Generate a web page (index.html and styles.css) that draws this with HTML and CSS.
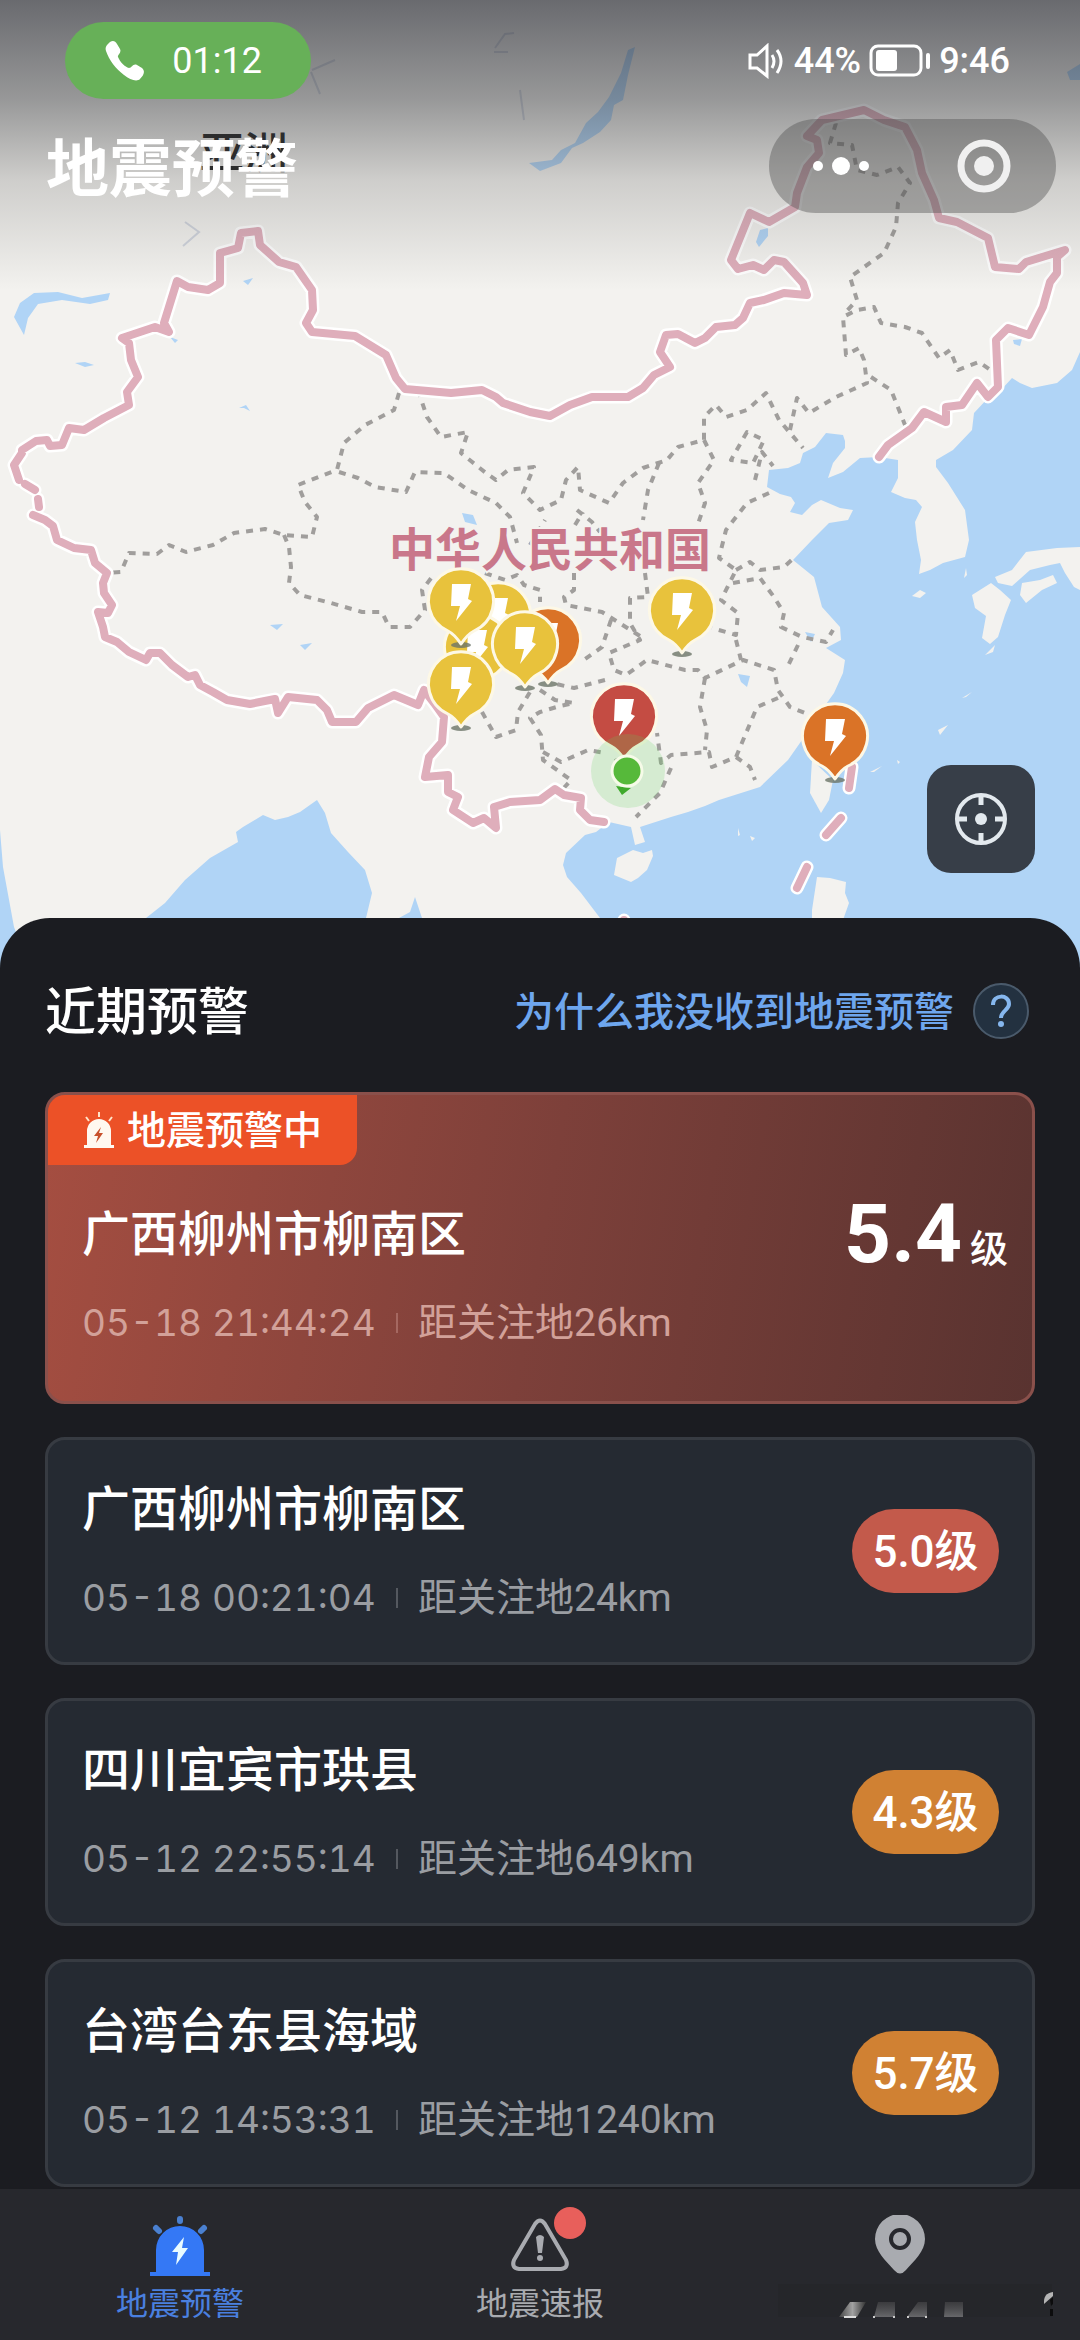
FILE: index.html
```html
<!DOCTYPE html>
<html lang="zh-CN">
<head>
    <meta charset="UTF-8">
    <meta name="viewport" content="width=device-width, initial-scale=1.0">
    <title>地震预警</title>
    <link rel="stylesheet" href="styles.css">
</head>
<body>
    <!-- shared icons -->
    <svg class="sprite" aria-hidden="true">
        <symbol id="pin" viewBox="-40 -40 80 96" overflow="visible">
            <ellipse cx="0" cy="44" rx="10" ry="3" fill="#6b7468" fill-opacity="0.8"/>
            <path class="pin-body" d="M-13 30 A32.500 32.500 0 1 1 13 30 C7 33 4 37 0 43 C-4 37 -7 33 -13 30 Z"/>
            <path d="M-9 -17 H10 L7 -2 L11 0 L-5 20 L-1 5 H-10 Z" fill="#fff"/>
        </symbol>
        <path id="border" d="M19 480 L14 465 L22 453 L22 450 L36 441 L47 440 L50 446 L62 445 L69 428 L84 430 L104 418 L129 405 L127 392 L138 377 L131 360 L129 343 L122 338 L155 327 L169 332 L164 323 L177 281 L188 287 L208 290 L220 283 L220 253 L238 248 L241 233 L258 231 L260 245 L279 262 L296 267 L312 290 L313 310 L306 323 L312 332 L355 336 L386 355 L396 378 L405 389 L451 393 L482 390 L496 397 L503 403 L530 412 L550 416 L570 405 L592 397 L628 397 L643 388 L654 375 L670 367 L660 352 L666 335 L678 334 L695 343 L705 338 L716 327 L735 325 L743 318 L750 303 L764 300 L784 293 L807 295 L803 283 L784 262 L774 260 L764 270 L753 265 L738 269 L731 260 L750 213 L769 222 L795 207 L797 193 L807 167 L819 153 L817 140 L807 136 L822 120 L864 110 L884 120 L905 127 L917 150 L922 173 L934 200 L939 218 L957 222 L988 238 L995 267 L1019 269 L1026 262 L1065 250 L1057 257 L1057 273 L1050 282 L1043 307 L1029 335 L1008 328 L996 340 L998 387 L988 397 L977 383 L962 405 L946 407 L946 422 L924 412 L912 428 L888 445 L879 457 M25 484 L35 490 M38 499 L39 507 M33 515 L45 520 L53 526 L57 540 L74 548 L91 550 L95 563 L107 573 L103 583 L104 593 L112 605 L108 613 L98 612 L103 627 L105 637 L117 642 L129 652 L146 660 L150 653 L160 653 L172 665 L188 677 L195 675 L200 685 L213 692 L227 700 L250 704 L275 699 L278 713 L288 697 L317 700 L327 710 L332 722 L356 722 L368 708 L394 695 L418 705 L424 690 L434 703 L444 717 L442 742 L429 757 L425 777 L448 775 L448 792 L458 797 L453 810 L473 823 L484 818 L496 828 L494 807 L510 802 L540 800 L555 789 L564 795 L581 798 L580 810 L590 820 L604 822 M852 767 L849 788 M841 818 L826 835 M807 867 L797 888 M624 920 V930"/>
    </svg>

    <section class="map">
        <svg class="map-canvas" viewBox="0 0 1080 968" preserveAspectRatio="xMidYMin slice" role="img" aria-label="地图">
            <rect width="1080" height="968" fill="#f3f2ef"/>

            <!-- sea -->
            <g class="sea">
                <path d="M1080 352 L1072 370 L1057 383 L1032 388 L1020 383 L1012 378 L1001 390 L988 398 L974 413 L972 430 L953 450 L936 460 L936 467 L948 483 L965 510 L969 540 L965 557 L943 563 L930 570 L919 574 L921 560 L917 540 L915 522 L922 507 L916 500 L905 498 L891 492 L898 478 L898 460 L879 457 L860 458 L843 472 L828 478 L833 463 L845 448 L845 441 L843 435 L826 433 L815 447 L803 453 L800 463 L788 468 L769 470 L767 487 L780 494 L791 497 L795 503 L790 512 L802 515 L812 505 L821 500 L840 508 L853 510 L848 520 L829 523 L812 540 L793 560 L814 577 L822 607 L840 627 L841 640 L826 648 L845 660 L843 673 L834 693 L824 707 L802 740 L788 760 L760 787 L719 800 L705 806 L688 812 L671 817 L640 827 L645 842 L635 845 L631 827 L609 822 L596 832 L585 835 L566 853 L563 865 L567 877 L581 893 L600 918 L625 968 H1080 Z"/>
                <path d="M100 968 L146 918 L165 903 L185 880 L210 858 L238 842 L236 832 L243 827 L263 815 L275 820 L288 817 L300 812 L317 800 L325 813 L331 833 L348 852 L365 870 L372 893 L366 918 L360 968 Z"/>
                <path d="M395 968 L399 918 L410 912 L415 897 L422 918 L430 968 Z"/>
                <path d="M0 830 L3 867 L14 927 L30 968 H0 Z"/>
            </g>

            <!-- lakes -->
            <g class="lake">
                <path d="M635 47 L628 50 L621 73 L609 97 L598 112 L586 123 L575 143 L561 150 L552 160 L529 163 L540 171 L561 163 L572 148 L583 143 L600 132 L611 120 L614 105 L623 100 L628 75 Z"/>
                <path d="M14 317 L20 303 L34 293 L58 292 L82 298 L110 293 L108 300 L90 304 L62 300 L38 304 L28 318 L24 335 Z"/>
                <path d="M75 363 L85 362 L94 365 L85 367 Z"/>
                <path d="M170 337 L178 340 L175 343 Z"/>
                <path d="M243 281 L253 278 L248 285 Z"/>
                <path d="M239 408 L246 405 L250 411 L244 408 Z"/>
                <path d="M760 230 L768 228 L768 236 L759 247 L756 242 Z"/>
                <path d="M1013 340 L1022 339 L1020 346 L1014 344 Z"/>
                <path d="M462 513 L473 515 L477 525 L465 522 Z"/>
                <path d="M300 645 L312 643 L305 650 Z"/>
                <path d="M270 625 L283 624 L277 630 Z"/>
                <path d="M1067 72 L1080 64 V80 L1070 80 Z"/>
                <path d="M738 674 L750 676 L747 687 L741 682 Z"/>
                <path d="M805 632 L815 634 L811 642 Z"/>
            </g>
            <path d="M495 48 L505 34 L514 33 M494 52 L508 52 M312 70 L335 60 M311 72 L320 94 M520 90 L524 120 M185 222 L199 232 L183 246" fill="none" stroke="#9aa7c4" stroke-width="2" stroke-opacity="0.4"/>

            <!-- islands -->
            <g class="land">
                <path d="M1080 547 L1057 548 L1026 552 L1012 570 L995 577 L998 583 L1012 586 L1030 570 L1050 565 L1060 563 L1065 573 L1074 587 L1080 590 Z"/>
                <path d="M1022 583 L1040 580 L1053 575 L1057 583 L1042 590 L1026 603 L1020 595 Z"/>
                <path d="M991 583 L1000 590 L1011 600 L1005 615 L998 637 L990 644 L982 638 L986 616 L975 608 L972 595 Z"/>
                <path d="M912 596 L920 590 L926 593 L920 598 Z"/>
                <path d="M812 760 L833 780 L829 800 L821 813 L810 793 Z"/>
                <path d="M633 850 L643 853 L652 850 L653 856 L647 870 L638 878 L631 882 L614 875 L617 858 Z"/>
                <path d="M817 877 L830 878 L846 882 L845 893 L849 903 L843 920 L850 968 H812 L812 910 Z"/>
                <path d="M966 568 L967 575 L964 578 Z M962 698 L972 692 L966 697 Z M938 730 L948 725 L940 735 Z M870 772 L882 766 L874 772 Z M897 760 L900 762 L898 764 Z M738 828 L740 835 L738 836 Z M750 836 L755 838 L752 841 Z M985 655 L993 652 L995 645 Z"/>
            </g>

            <!-- province lines -->
            <g class="province">
                <path d="M399 393 L394 410 L365 425 L344 443 L337 470 L298 485 L305 502 L317 517 L312 537 L284 535 L265 529 L234 533 L213 545 L186 552 L169 545 L157 554 L129 553 L121 572 L107 573"/>
                <path d="M284 535 L289 547 L291 567 L289 583 L300 595 L331 603 L362 612 L382 612 L389 627 L410 627 L425 610 L422 590 L432 577"/>
                <path d="M485 573 L505 580 L517 575 L524 585 L540 590 L540 602"/>
                <path d="M339 472 L358 478 L375 487 L406 492 L415 472 L444 473 L468 490 L496 503 L510 517 L517 543"/>
                <path d="M418 390 L427 417 L441 437 L468 432 L461 453 L486 473 L496 480 L508 470 L534 467 L523 493 L540 510 L561 500 L566 480 L578 467 L580 490 L609 503 L623 483 L643 468 L667 460 L678 447 L704 440 L704 417 L716 405 L726 417 L747 410 L766 393 L779 420 L803 448"/>
                <path d="M790 430 L797 398 L809 413 L836 397 L867 383 L864 360 L859 348 L846 355 L843 317 L857 310 L874 307 L881 323 L905 327 L922 333 L939 358 L950 350 L958 370 L979 362 L995 373"/>
                <path d="M836 123 L830 143 L852 145 L857 170 L877 175 L898 167 L910 183 L898 203 L896 227 L884 253 L850 277 L857 300 L843 315"/>
                <path d="M871 377 L891 390 L905 425"/>
                <path d="M747 432 L731 460 L753 463 L764 440 Z M755 480 L762 452 L773 466"/>
                <path d="M704 440 L714 460 L698 483 L705 503 L697 527"/>
                <path d="M659 463 L648 490 L643 520 M645 573 L648 597 L630 598 L630 623 L640 640 L609 653 L614 670 L626 675 L647 660 L685 670 L698 670 L705 678 L743 660 L774 670 L778 690 L790 707 L805 713"/>
                <path d="M769 493 L747 503 L726 530 L719 558 L736 570 L721 600 L738 613 L736 635 L712 628 M736 640 L741 660"/>
                <path d="M736 570 L750 562 L760 570 L784 567 L795 557"/>
                <path d="M733 583 L760 578 L774 597 L784 613 L781 627 L802 637 L826 642 L833 630 M798 645 L786 670"/>
                <path d="M778 698 L757 707 L736 757 L712 767 L709 752 L671 755 L661 763 L657 733"/>
                <path d="M705 678 L700 707 L707 730 L705 750 M736 757 L750 767 L755 780"/>
                <path d="M671 768 L660 793 L636 817"/>
                <path d="M605 680 L574 688 L556 684 M540 690 L555 700 L574 703 L560 706 L540 712 L530 718 L541 735 L543 760 L571 780 L562 790 M543 752 L561 762 L588 750 L605 753"/>
                <path d="M574 573 L574 590 L564 597 L566 605 L602 612 L640 636 M611 620 L602 647 L581 662"/>
                <path d="M482 712 L496 737 L516 730 L518 712 L530 692"/>
                <path d="M530 545 L545 520 M577 510 L592 522 L600 532 M575 525 L583 512"/>
            </g>

            <!-- national border, white casing below the pink line -->
            <use class="border-casing" href="#border"/>
            <use class="border" href="#border"/>

            <g class="map-text">
                <text class="continent" x="244" y="169">亚洲</text>
                <text class="country" x="550" y="566">中华人民共和国</text>
            </g>

            <!-- earthquake pins -->
            <g class="yellow">
                <use href="#pin" x="458" y="575" width="80" height="96"/>
                <use href="#pin" x="437" y="607" width="80" height="96"/>
            </g>
            <use class="orange" href="#pin" x="508" y="600" width="80" height="96"/>
            <g class="yellow">
                <use href="#pin" x="485" y="604" width="80" height="96"/>
                <use href="#pin" x="421" y="561" width="80" height="96"/>
                <use href="#pin" x="421" y="644" width="80" height="96"/>
                <use href="#pin" x="642" y="570" width="80" height="96"/>
            </g>
            <use class="orange" href="#pin" x="795" y="696" width="80" height="96"/>
            <use class="red" href="#pin" x="584" y="676" width="80" height="96"/>

            <!-- my place -->
            <circle cx="628" cy="771" r="37" fill="#5fd35a" fill-opacity="0.2"/>
            <path d="M616 786 L631 788 L622 795 Z" fill="#3fa92c"/>
            <circle cx="627" cy="771" r="15" fill="#56b93a" stroke="#f6fbe8" stroke-width="3"/>
        </svg>

        <header class="top">
            <div class="status-bar">
                <div class="call">
                    <svg width="40" height="42" viewBox="0 0 40 42" aria-hidden="true">
                        <path d="M3 4 C6 0 10 0 12 4 L15 9 C17 13 12 15 13 17 C15 22 20 27 24 28 C27 28 28 23 32 25 L37 28 C41 32 38 36 35 39 C32 42 25 40 19 35 C11 29 4 20 1 11 C0 8 1 6 3 4 Z" fill="#fff"/>
                    </svg>
                    <span>01:12</span>
                </div>
                <div class="status-icons">
                    <svg width="38" height="36" viewBox="0 0 38 36" fill="none" stroke="#fff" aria-hidden="true">
                        <path d="M2 12 V25 H9 L19 33 V3 L9 12 Z" stroke-width="3"/>
                        <path d="M24 12 Q28 18 24 25 M29 7 Q37 18 29 30" stroke-width="3"/>
                    </svg>
                    <span>44%</span>
                    <svg width="62" height="34" viewBox="0 0 62 34" aria-hidden="true">
                        <rect x="2" y="2" width="50" height="29" rx="7" fill="none" stroke="#fff" stroke-width="3"/>
                        <rect x="7" y="6" width="21" height="21" rx="3" fill="#fff"/>
                        <rect x="57" y="9" width="4" height="16" rx="2" fill="#fff"/>
                    </svg>
                    <span>9:46</span>
                </div>
            </div>
            <div class="title-bar">
                <h1>地震预警</h1>
                <div class="capsule">
                    <button type="button" aria-label="更多">
                        <svg width="56" height="20" viewBox="0 0 56 20" fill="#fff">
                            <circle cx="5" cy="10" r="5"/><circle cx="28" cy="10" r="9"/><circle cx="51" cy="10" r="5"/>
                        </svg>
                    </button>
                    <button type="button" aria-label="关闭">
                        <svg width="54" height="54" viewBox="0 0 54 54">
                            <circle cx="27" cy="27" r="23" fill="none" stroke="#f0f0f0" stroke-width="7"/>
                            <circle cx="27" cy="27" r="10" fill="#f0f0f0"/>
                        </svg>
                    </button>
                </div>
            </div>
        </header>

        <button type="button" class="locate" aria-label="定位">
            <svg width="54" height="54" viewBox="0 0 54 54" fill="none" stroke="#e3e9ee" stroke-width="4">
                <circle cx="27" cy="27" r="24"/>
                <path d="M27 3 V13 M27 41 V51 M3 27 H13 M41 27 H51" stroke-width="5"/>
                <circle cx="27" cy="27" r="6" fill="#e3e9ee" stroke="none"/>
            </svg>
        </button>
    </section>

    <main class="sheet">
        <div class="sheet-header">
            <h2>近期预警</h2>
            <a href="#help"><span>为什么我没收到地震预警</span>
                <svg width="58" height="58" viewBox="0 0 58 58" fill="none" aria-hidden="true">
                    <circle cx="29" cy="29" r="27" fill="#233140" stroke="#4a5a6b" stroke-width="2"/>
                    <path d="M21 23 C21 12 37 12 37 22 C37 28 29 29 29 36" stroke="#86b7ee" stroke-width="4"/>
                    <circle cx="29" cy="42" r="3" fill="#86b7ee"/>
                </svg>
            </a>
        </div>

        <article class="card card-active">
            <div class="tag">
                <svg width="30" height="37" viewBox="0 0 30 37" aria-hidden="true">
                    <path d="M0 33 H3 V19 A12 12 0 0 1 27 19 V33 H30 V36 H0 Z" fill="#fff8f0"/>
                    <path d="M15 0 V5 M2 5 L5 9 M28 5 L25 9" stroke="#ffe3c8" stroke-width="2"/>
                    <path d="M17 15 L10 24 H14 L12 31 L19 21 H15 Z" fill="#c8502c"/>
                </svg>
                <span>地震预警中</span>
            </div>
            <div class="card-body">
                <div>
                    <h3>广西柳州市柳南区</h3>
                    <p class="meta"><time>05-18 21:44:24</time><span>距关注地26km</span></p>
                </div>
                <p class="magnitude"><strong>5.4</strong>级</p>
            </div>
        </article>

        <article class="card">
            <div class="card-body">
                <div>
                    <h3>广西柳州市柳南区</h3>
                    <p class="meta"><time>05-18 00:21:04</time><span>距关注地24km</span></p>
                </div>
                <p class="level level-red">5.0级</p>
            </div>
        </article>

        <article class="card">
            <div class="card-body">
                <div>
                    <h3>四川宜宾市珙县</h3>
                    <p class="meta"><time>05-12 22:55:14</time><span>距关注地649km</span></p>
                </div>
                <p class="level">4.3级</p>
            </div>
        </article>

        <article class="card">
            <div class="card-body">
                <div>
                    <h3>台湾台东县海域</h3>
                    <p class="meta"><time>05-12 14:53:31</time><span>距关注地1240km</span></p>
                </div>
                <p class="level">5.7级</p>
            </div>
        </article>
    </main>

    <nav class="tab-bar">
        <a href="#warning" class="active">
            <svg width="60" height="62" viewBox="0 0 60 62" aria-hidden="true">
                <path d="M0 57 H6 V35 A24 24 0 0 1 54 35 V57 H60 V61 H0 Z" fill="#3478f5"/>
                <path d="M30 4 V6 M6 13 L9 16 M54 13 L51 16" stroke="#4a80d0" stroke-width="6" stroke-linecap="round"/>
                <path d="M34 22 L22 37 H28 L26 50 L38 33 H32 Z" fill="#e8fbff"/>
            </svg>
            <span>地震预警</span>
        </a>
        <a href="#report">
            <svg width="60" height="62" viewBox="0 0 60 62" fill="none" aria-hidden="true">
                <path d="M25 9 Q30 2 35 9 L56 45 Q59 53 51 54 H9 Q1 53 4 45 Z" stroke="#a9abb0" stroke-width="4"/>
                <path d="M26 22 Q30 18 34 22 L32 38 H28 Z" fill="#a9abb0"/>
                <circle cx="30" cy="43" r="3" fill="#a9abb0"/>
            </svg>
            <i class="dot"></i>
            <span>地震速报</span>
        </a>
        <a href="#place" aria-label="我的位置">
            <svg width="60" height="62" viewBox="0 0 60 62" aria-hidden="true">
                <path d="M30 -1 A25 25 0 0 1 55 24 C55 36 44 46 36 55 Q30 62 24 55 C16 46 5 36 5 24 A25 25 0 0 1 30 -1 Z" fill="#a9abb0"/>
                <circle cx="30" cy="24" r="9" fill="none" stroke="#27282d" stroke-width="4"/>
            </svg>
            <svg class="smear" viewBox="0 0 320 40" aria-hidden="true">
                <defs>
                    <linearGradient id="fade" x1="0" y1="0" x2="0" y2="1">
                        <stop offset="0" stop-color="#4a4a4c" stop-opacity="0.6"/>
                        <stop offset="1" stop-color="#68686b"/>
                    </linearGradient>
                    <linearGradient id="streak" x1="0" y1="0" x2="1" y2="0">
                        <stop offset="0" stop-color="#444"/>
                        <stop offset="0.5" stop-color="#a2a2a2"/>
                        <stop offset="1" stop-color="#333"/>
                    </linearGradient>
                </defs>
                <rect x="38" y="4" width="274" height="33" fill="#222326" fill-opacity="0.3"/>
                <path d="M110 22 H126 L117 37 H99 Z" fill="url(#streak)"/>
                <path d="M138 22 H155 V37 H134 Z M178 22 H187 V37 H167 Z M205 22 H223 V37 H204 Z" fill="url(#fade)"/>
                <path d="M104 36 H116 V38 H104 Z" fill="#ddd"/>
                <path d="M133 36 H135 V38 H133 Z M153 36 H155 V38 H153 Z M167 36 H169 V38 H167 Z M185 36 H187 V38 H185 Z" fill="#ccc"/>
                <path d="M304 24 Q303 13 313 12 V16 Z" fill="#b5b5b5"/>
                <path d="M310 20 L313 17 V24 L311 26 Z M310 29 H313 V36 H310 Z" fill="#0c0c0d"/>
            </svg>
        </a>
    </nav>
</body>
</html>
```
FILE: styles.css
```css
* {
    box-sizing: border-box;
}
body {
    font-family: Roboto, "Noto Sans CJK SC", sans-serif;
    margin: 0;
    min-height: 100vh;
    display: flex;
    flex-direction: column;
    background-color: #1b1c21;
    color: #fff;
}
h1, h2, h3, p {
    margin: 0;
    font-weight: 500;
}
a {
    color: inherit;
    text-decoration: none;
}
button {
    padding: 0;
    border: none;
    background: none;
    cursor: pointer;
}
svg {
    display: block;
    flex-shrink: 0;
}
.sprite {
    position: absolute;
    width: 0;
    height: 0;
}

/* map */
.map {
    position: relative;
    aspect-ratio: 1080 / 968;
    overflow: hidden;
}
.map-canvas {
    position: absolute;
    top: 0;
    left: 0;
    width: 100%;
    height: 100%;
}
.sea, .lake {
    fill: #b0d4f6;
}
.land {
    fill: #f3f2ef;
}
.province {
    fill: none;
    stroke: #a09e9c;
    stroke-width: 4;
    stroke-dasharray: 7 7;
    stroke-linejoin: round;
}
.border, .border-casing {
    fill: none;
    stroke-linejoin: round;
    stroke-linecap: round;
}
.border {
    stroke: #dfaebb;
    stroke-width: 8;
}
.border-casing {
    stroke: #fff;
    stroke-width: 13;
}
.map-text {
    text-anchor: middle;
    font-weight: 700;
}
.country {
    font-size: 46px;
    fill: #c9778a;
    stroke: #f3f2ef;
    stroke-width: 4;
    paint-order: stroke;
}
.continent {
    font-size: 44px;
    font-weight: 500;
    fill: #1d1d1d;
}
.pin-body {
    stroke: #fdf8e6;
    stroke-width: 3;
    stroke-linejoin: round;
}
.yellow {
    fill: #e8c23c;
}
.orange {
    fill: #da7327;
}
.red {
    fill: #c44c43;
}
.top {
    position: relative;
    height: 290px;
    padding-top: 22px;
    background: linear-gradient(rgba(40, 42, 50, 0.68), rgba(60, 62, 66, 0.5) 34%, rgba(90, 90, 90, 0.24) 62%, rgba(160, 160, 160, 0));
}
.status-bar {
    display: flex;
    justify-content: space-between;
    align-items: center;
    height: 77px;
    padding: 0 70px 0 65px;
    font-size: 36px;
    line-height: 40px;
}
.call {
    display: flex;
    align-items: center;
    justify-content: space-between;
    width: 246px;
    height: 77px;
    padding: 0 49px 0 40px;
    border-radius: 39px;
    background-color: #67b058;
}
.status-icons {
    display: flex;
    align-items: center;
    gap: 8px;
    font-weight: 500;
}
.title-bar {
    display: flex;
    justify-content: space-between;
    align-items: center;
    margin-top: 20px;
    padding: 0 24px 0 46px;
}
.title-bar h1 {
    padding-top: 8px;
    font-size: 63px;
    line-height: 80px;
    font-weight: 700;
}
.capsule {
    display: flex;
    width: 287px;
    height: 94px;
    border-radius: 47px;
    background-color: rgba(80, 80, 80, 0.42);
}
.capsule button {
    flex: 1;
    display: flex;
    justify-content: center;
    align-items: center;
}
.locate {
    position: absolute;
    right: 45px;
    bottom: 95px;
    width: 108px;
    height: 108px;
    border-radius: 24px;
    background-color: #373e48;
    display: flex;
    justify-content: center;
    align-items: center;
}

/* list */
.sheet {
    position: relative;
    flex: 1;
    display: flex;
    flex-direction: column;
    gap: 33px;
    margin-top: -50px;
    padding: 64px 45px 2px;
    border-radius: 50px 50px 0 0;
    background-color: #1b1c21;
}
.sheet-header {
    display: flex;
    justify-content: space-between;
    align-items: center;
    height: 58px;
    margin-bottom: 19px;
    padding-right: 5px;
}
.sheet-header h2 {
    padding-top: 4px;
    font-size: 51px;
    line-height: 58px;
}
.sheet-header a {
    display: flex;
    align-items: center;
    gap: 18px;
    font-size: 40px;
    line-height: 56px;
    font-weight: 500;
    color: #6ea6ee;
}
.sheet-header a span {
    padding-top: 4px;
}
.card {
    border: 3px solid #373b42;
    border-radius: 20px;
    background-color: #252a32;
}
.card-active {
    border-color: #8a504b;
    background: linear-gradient(100deg, #a54e41, #7d403a 50%, #593330);
}
.tag {
    display: flex;
    align-items: center;
    gap: 13px;
    width: 309px;
    height: 70px;
    padding-left: 36px;
    border-radius: 17px 0 17px 0;
    background-color: #ec5127;
    font-size: 39px;
    line-height: 48px;
    font-weight: 500;
}
.tag span {
    padding-top: 2px;
}
.card-body {
    display: flex;
    justify-content: space-between;
    align-items: center;
    padding: 40px 33px 40px 34px;
}
.card-active .card-body {
    align-items: flex-start;
    padding: 40px 24px 54px 34px;
}
.card h3 {
    font-size: 48px;
    line-height: 60px;
}
.meta {
    display: flex;
    align-items: center;
    margin-top: 34px;
    font-size: 39px;
    line-height: 48px;
    font-weight: 400;
    color: #9a9da2;
}
.card-active .meta {
    color: #d2a199;
}
.meta time {
    min-width: 294px;
    font-family: Inter, sans-serif;
    font-size: 37px;
    font-variant-numeric: tabular-nums;
}
.meta span {
    display: flex;
    align-items: center;
}
.meta span::before {
    content: "";
    width: 2px;
    height: 20px;
    margin: 0 20px;
    background-color: currentColor;
    opacity: 0.4;
}
.magnitude {
    display: flex;
    align-items: baseline;
    gap: 8px;
    font-size: 38px;
    line-height: 58px;
}
.magnitude strong {
    font-size: 82px;
    font-weight: 700;
}
.level {
    width: 147px;
    padding-top: 2px;
    border-radius: 42px;
    background-color: #d08133;
    font-size: 44px;
    line-height: 82px;
    text-align: center;
}
.level-red {
    background-color: #c35a4b;
}

/* bottom tabs */
.tab-bar {
    position: sticky;
    bottom: 0;
    display: flex;
    height: 151px;
    padding-top: 26px;
    background-color: #27282d;
    color: #a9abb0;
    font-size: 32px;
    line-height: 40px;
}
.tab-bar a {
    position: relative;
    flex: 1;
    display: flex;
    flex-direction: column;
    align-items: center;
    gap: 7px;
}
.tab-bar .active {
    color: #4a80e0;
}
.dot {
    position: absolute;
    top: -8px;
    left: calc(50% + 14px);
    width: 32px;
    height: 32px;
    border-radius: 50%;
    background-color: #e85f5b;
}
.smear {
    width: 320px;
    height: 40px;
    margin-top: -4px;
}
```
